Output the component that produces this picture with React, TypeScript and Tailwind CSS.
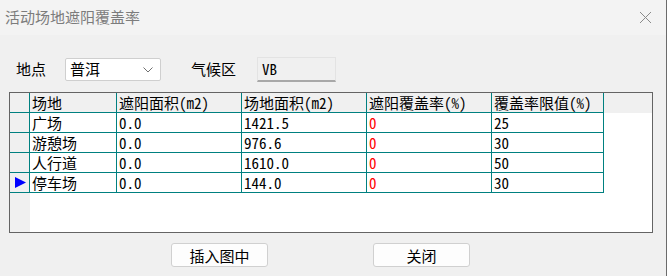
import React from 'react';

const cols = [20, 87, 125, 125, 125, 112];

const headers = ['', '场地', '遮阳面积(m2)', '场地面积(m2)', '遮阳覆盖率(%)', '覆盖率限值(%)'];

const rows = [
  { name: '广场', shade: '0.0', area: '1421.5', rate: '0', limit: '25' },
  { name: '游憩场', shade: '0.0', area: '976.6', rate: '0', limit: '30' },
  { name: '人行道', shade: '0.0', area: '1610.0', rate: '0', limit: '50' },
  { name: '停车场', shade: '0.0', area: '144.0', rate: '0', limit: '30', current: true },
];

const mono = { fontFamily: '"Noto Sans Mono CJK SC", "Liberation Mono", monospace' };
const sans = { fontFamily: '"Noto Sans CJK SC", "Noto Sans", sans-serif' };

const Cell: React.FC<{ w: number; className?: string; children?: React.ReactNode }> = ({ w, className = '', children }) => (
  <div
    className={`h-[20px] shrink-0 border-r border-b border-[#008080] pl-[2px] text-[15px] leading-[19px] whitespace-nowrap overflow-hidden ${className}`}
    style={{ width: w }}
  >
    {children}
  </div>
);

export default function App() {
  return (
    <div className="w-[667px] h-[276px] bg-[#f0f0f0] flex flex-col border-r border-[#6b6b6b] overflow-hidden">
      {/* Title bar */}
      <div className="h-[35px] bg-[#f3f3f3] flex items-center justify-between pl-[5px] pr-[14px] shrink-0">
        <span className="text-[15px] text-[#7c7c7c]" style={sans}>活动场地遮阳覆盖率</span>
        <svg width="13" height="13" viewBox="0 0 13 13">
          <path d="M1 1 L12 12 M12 1 L1 12" stroke="#8a8a8a" strokeWidth="1" fill="none" />
        </svg>
      </div>

      {/* Location row */}
      <div className="flex items-center mt-[22px] h-[25px] pl-[16px]">
        <span className="w-[49px] text-[15px] text-black" style={sans}>地点</span>
        <div className="w-[96px] h-[23px] bg-white border border-[#cfcfcf] rounded-[2px] flex items-center justify-between pl-[4px] pr-[7px]">
          <span className="text-[15px] text-black" style={sans}>普洱</span>
          <svg width="10" height="6" viewBox="0 0 10 6">
            <path d="M0.5 0.5 L5 5 L9.5 0.5" stroke="#707070" strokeWidth="1" fill="none" />
          </svg>
        </div>
        <span className="ml-[30px] w-[66px] text-[15px] text-black" style={sans}>气候区</span>
        <div className="w-[79px] h-[25px] bg-[#f0f0f0] border-t border-l border-[#e3e3e3] border-b-2 border-b-[#a8a8a8] border-r border-r-[#e3e3e3] flex items-center pl-[4px]">
          <span className="text-[15px] text-black" style={mono}>VB</span>
        </div>
      </div>

      {/* Grid */}
      <div className="mt-[10px] ml-[9px] w-[644px] h-[141px] border border-[#646464] bg-white flex flex-col" style={mono}>
        <div className="flex bg-[#f0f0f0]">
          {headers.map((h, i) => (
            <Cell key={i} w={cols[i]}>{h}</Cell>
          ))}
        </div>
        {rows.map((r) => (
          <div key={r.name} className="flex">
            <Cell w={cols[0]} className="bg-[#f0f0f0] flex items-center !pl-[5px]">
              {r.current && (
                <svg width="11" height="11" viewBox="0 0 11 11">
                  <path d="M0 0 L11 5.5 L0 11 Z" fill="#0000ff" />
                </svg>
              )}
            </Cell>
            <Cell w={cols[1]}>{r.name}</Cell>
            <Cell w={cols[2]}>{r.shade}</Cell>
            <Cell w={cols[3]}>{r.area}</Cell>
            <Cell w={cols[4]} className="text-[#ff0000]">{r.rate}</Cell>
            <Cell w={cols[5]}>{r.limit}</Cell>
          </div>
        ))}
        <div className="flex-1 flex">
          <div className="w-[20px] bg-[#f0f0f0]" />
        </div>
      </div>

      {/* Buttons */}
      <div className="flex mt-[10px] pl-[171px] gap-[105px]" style={mono}>
        <button className="w-[97px] h-[24px] bg-[#fdfdfd] border border-[#d0d0d0] rounded-[3px] text-[15px] text-black leading-none">插入图中</button>
        <button className="w-[97px] h-[24px] bg-[#fdfdfd] border border-[#d0d0d0] rounded-[3px] text-[15px] text-black leading-none">关闭</button>
      </div>
    </div>
  );
}
